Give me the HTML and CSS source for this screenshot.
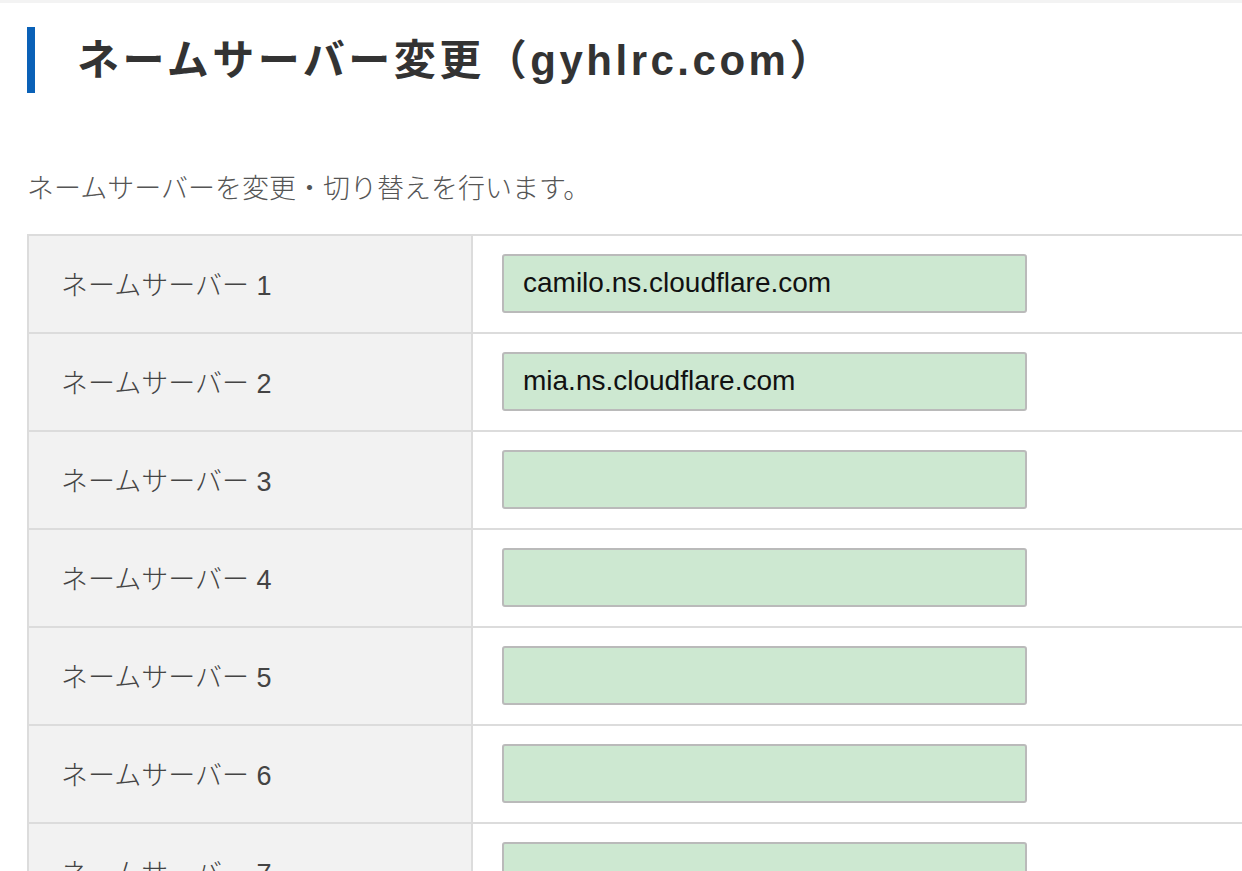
FILE: index.html
```html
<!DOCTYPE html>
<html lang="ja">
<head>
<meta charset="utf-8">
<title>ネームサーバー変更</title>
<link rel="stylesheet" href="styles.css">
</head>
<body>
<div class="topline"></div>
<main class="page">
  <h1 class="title">ネームサーバー変更（gyhlrc.com）</h1>
  <p class="lead">ネームサーバーを変更・切り替えを行います。</p>
  <table class="ns-table">
    <tbody>
      <tr><th>ネームサーバー 1</th><td><input class="ns-input" type="text" value="camilo.ns.cloudflare.com"></td></tr>
      <tr><th>ネームサーバー 2</th><td><input class="ns-input" type="text" value="mia.ns.cloudflare.com"></td></tr>
      <tr><th>ネームサーバー 3</th><td><input class="ns-input" type="text" value=""></td></tr>
      <tr><th>ネームサーバー 4</th><td><input class="ns-input" type="text" value=""></td></tr>
      <tr><th>ネームサーバー 5</th><td><input class="ns-input" type="text" value=""></td></tr>
      <tr><th>ネームサーバー 6</th><td><input class="ns-input" type="text" value=""></td></tr>
      <tr><th>ネームサーバー 7</th><td><input class="ns-input" type="text" value=""></td></tr>
    </tbody>
  </table>
</main>
</body>
</html>
```

FILE: styles.css
```css
html, body {
  margin: 0;
  padding: 0;
  background: #fff;
  overflow: hidden;
}
body {
  font-family: "Liberation Sans", "Noto Sans CJK JP", sans-serif;
  color: #333;
}
.topline {
  height: 3px;
  background: #f3f3f3;
}
.page {
  padding: 24px 0 0 27px;
}
.title {
  margin: 0;
  height: 66px;
  line-height: 68px;
  border-left: 8px solid #0a61b7;
  padding-left: 42px;
  font-size: 42px;
  font-weight: 700;
  letter-spacing: 3.5px;
  color: #333;
}
.lead {
  margin: 74px 0 0;
  font-family: "Noto Sans CJK JP", sans-serif;
  font-size: 27px;
  line-height: 40px;
  font-weight: 300;
  color: #555;
}
.ns-table {
  margin-top: 27px;
  width: 100%;
  border-collapse: collapse;
}
.ns-table th,
.ns-table td {
  border: 2px solid #dcdcdc;
  height: 94px;
  padding: 0 0 2px;
  vertical-align: middle;
}
.ns-table td {
  border-right: none;
}
.ns-table th {
  width: 410px;
  background: #f2f2f2;
  text-align: left;
  padding-left: 32px;
  font-family: "Liberation Sans", "Noto Sans CJK JP", sans-serif;
  font-size: 27px;
  font-weight: 300;
  color: #444;
}
.ns-table td {
  padding-left: 29px;
  background: #fff;
}
.ns-input {
  display: block;
  box-sizing: border-box;
  width: 525px;
  height: 59px;
  margin: 0;
  padding: 0 19px;
  border: 2px solid #bababa;
  border-radius: 3px;
  background: #cde8d1;
  font-family: "Liberation Sans", Arial, sans-serif;
  font-size: 28px;
  color: #111;
  outline: none;
}
```
